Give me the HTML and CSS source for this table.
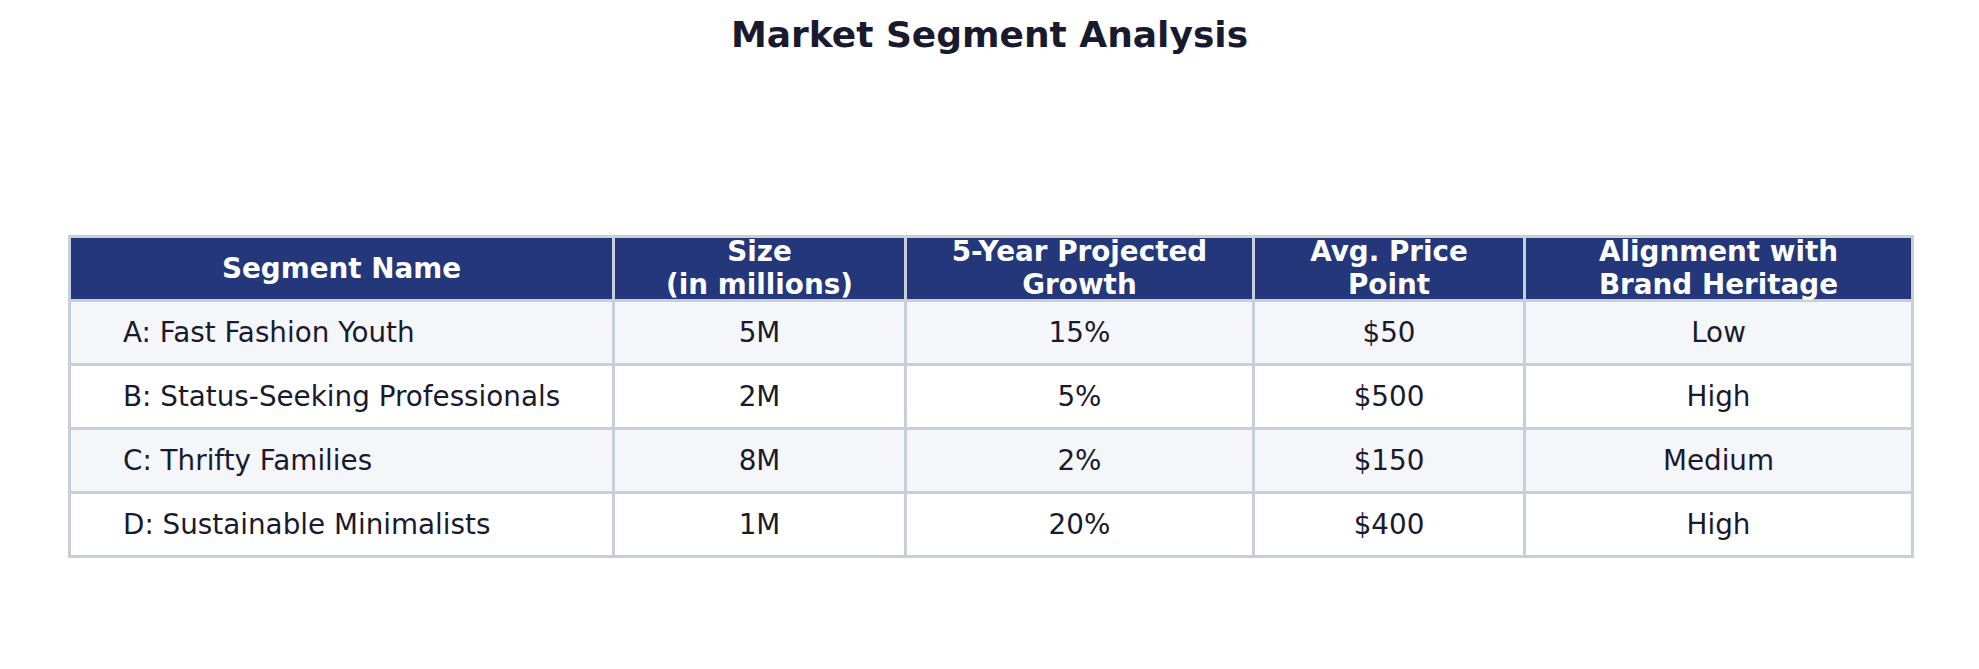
FILE: index.html
```html
<!DOCTYPE html>
<html>
<head>
<meta charset="utf-8">
<link rel="stylesheet" href="styles.css">
</head>
<body>
<div class="page">
  <h1 class="title">Market Segment Analysis</h1>
  <table class="grid">
    <colgroup>
      <col class="c1"><col class="c2"><col class="c3"><col class="c4"><col class="c5">
    </colgroup>
    <thead>
      <tr>
        <th><div class="hd">Segment Name</div></th>
        <th><div class="hd">Size<br>(in millions)</div></th>
        <th><div class="hd">5-Year Projected<br>Growth</div></th>
        <th><div class="hd">Avg. Price<br>Point</div></th>
        <th><div class="hd">Alignment with<br>Brand Heritage</div></th>
      </tr>
    </thead>
    <tbody>
      <tr class="alt"><td class="name">A: Fast Fashion Youth</td><td>5M</td><td>15%</td><td>$50</td><td>Low</td></tr>
      <tr><td class="name">B: Status-Seeking Professionals</td><td>2M</td><td>5%</td><td>$500</td><td>High</td></tr>
      <tr class="alt"><td class="name">C: Thrifty Families</td><td>8M</td><td>2%</td><td>$150</td><td>Medium</td></tr>
      <tr><td class="name">D: Sustainable Minimalists</td><td>1M</td><td>20%</td><td>$400</td><td>High</td></tr>
    </tbody>
  </table>
</div>
</body>
</html>
```

FILE: styles.css
```css
html, body {
  margin: 0;
  padding: 0;
  background: #ffffff;
}
.page {
  width: 1979px;
  height: 669px;
  font-family: "DejaVu Sans", sans-serif;
  color: #1a1a2e;
  display: flex;
  flex-direction: column;
  align-items: center;
}
.title {
  margin: 14px 0 0 0;
  font-size: 36px;
  line-height: 42px;
  font-weight: bold;
  color: #1a1a2e;
}
.grid {
  margin-top: 179px;
  margin-left: 68px;
  align-self: flex-start;
  border-collapse: collapse;
  table-layout: fixed;
  width: 1843px;
}
.c1 { width: 544px; }
.c2 { width: 292px; }
.c3 { width: 348px; }
.c4 { width: 271px; }
.c5 { width: 388px; }
.grid th, .grid td {
  border: 3px solid #c8cfd9;
  height: 61.1px;
  padding: 0;
  text-align: center;
  vertical-align: middle;
  font-size: 27.8px;
}
.grid th {
  background: #23377a;
  color: #ffffff;
  font-weight: bold;
  height: 60.5px;
}
.hd {
  height: 60px;
  line-height: 33px;
  display: flex;
  flex-direction: column;
  justify-content: center;
  align-items: center;
  overflow: visible;
  white-space: nowrap;
}
.grid td {
  color: #1a1a2e;
  background: #ffffff;
}
.grid tr.alt td {
  background: #f4f6fa;
}
.grid td.name {
  text-align: left;
  padding-left: 52px;
}
```
